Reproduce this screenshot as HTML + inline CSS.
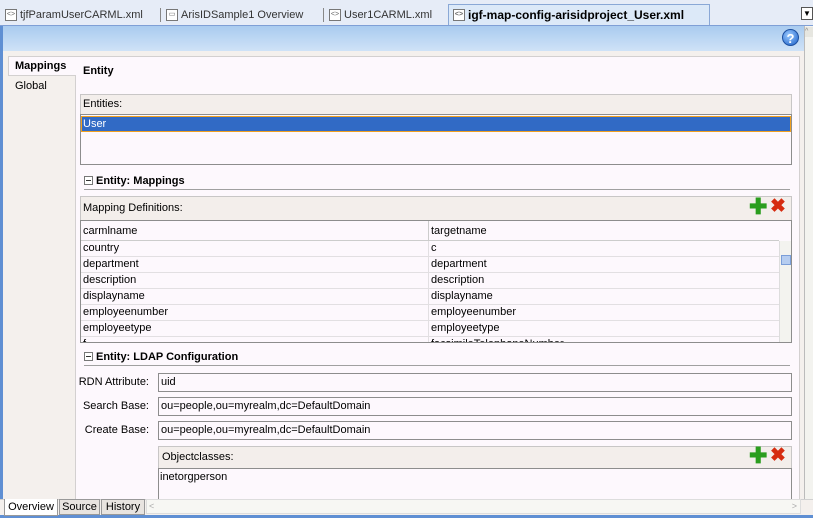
<!DOCTYPE html>
<html><head><style>
*{box-sizing:border-box;margin:0;padding:0}
body{width:813px;height:518px;overflow:hidden;font-family:"Liberation Sans",sans-serif;font-size:11px;color:#000;background:#f4f0ed;position:relative}
.a{position:absolute}
.tab{position:absolute;top:5px;height:20px;line-height:20px;font-size:11px;color:#333;padding-left:18px;white-space:nowrap}
.ic{position:absolute;left:3px;top:4px;width:12px;height:12px;border:1px solid #777;background:#fff;font-size:7px;line-height:10px;text-align:center;color:#666}
.inp{position:absolute;left:158px;width:634px;height:19px;border:1px solid #8d8d8d;background:#fdf8fd;padding-left:2px;line-height:17px}
.lbl{position:absolute;width:72px;text-align:right;left:77px}
.row{position:absolute;left:0;width:698px;height:16px;border-bottom:1px solid #e2dfe2;line-height:15px;padding-left:2px}
.row span{position:absolute;left:347px;top:0;border-left:1px solid #e2dfe2;padding-left:2px;height:16px}
.hd{position:absolute;font-weight:bold;font-size:11px}
.mb{display:inline-block;width:9px;height:9px;border:1px solid #777;vertical-align:-1px;margin-right:3px;position:relative;background:#fff}
.mb:after{content:"";position:absolute;left:1px;top:3px;width:5px;height:1px;background:#333}
.plus{position:absolute;color:#2a9d1e;font-weight:bold;font-size:22px;line-height:16px}
.x{position:absolute;color:#d62b10;font-weight:bold;font-size:19px;line-height:16px}
</style></head><body>
<div class="a" style="left:0;top:0;width:813px;height:26px;background:#e6ecf7"></div>
<div class="tab" style="left:2px">tjfParamUserCARML.xml<div class="ic">&lt;&gt;</div></div>
<div class="a" style="left:160px;top:8px;width:1px;height:14px;background:#888"></div>
<div class="tab" style="left:163px">ArisIDSample1 Overview<div class="ic">▭</div></div>
<div class="a" style="left:323px;top:8px;width:1px;height:14px;background:#888"></div>
<div class="tab" style="left:326px">User1CARML.xml<div class="ic">&lt;&gt;</div></div>
<div class="a" style="left:448px;top:4px;width:262px;height:22px;background:#dce9f8;border:1px solid #8aa8d6;border-bottom:none"></div>
<div class="tab" style="left:450px;font-weight:bold;color:#000;font-size:12px">igf-map-config-arisidproject_User.xml<div class="ic">&lt;&gt;</div></div>
<div class="a" style="left:801px;top:7px;width:12px;height:13px;border:1px solid #555;background:#fff;font-size:8px;text-align:center;line-height:11px">▼</div>
<div class="a" style="left:0;top:25px;width:813px;height:1px;background:#7f9fd6"></div>
<div class="a" style="left:0;top:26px;width:804px;height:25px;background:linear-gradient(#a9cbef,#cfe2f7)"></div>
<div class="a" style="left:0;top:26px;width:3px;height:492px;background:#5f8fd3"></div>
<div class="a" style="left:782px;top:29px;width:17px;height:17px;border-radius:50%;background:radial-gradient(circle at 40% 35%,#9ccbff,#1a5fc8);color:#fff;font-weight:bold;font-size:13px;text-align:center;line-height:17px;border:1px solid #1c4fa0">?</div>
<div class="a" style="left:804px;top:26px;width:9px;height:473px;background:#f3f3ef;border-left:1px solid #bbb"></div>
<div class="a" style="left:805px;top:27px;width:8px;height:10px;background:#e6e6e0;font-size:7px;color:#888;line-height:10px">^</div>
<div class="a" style="left:75px;top:56px;width:725px;height:450px;background:#fdf8fd;border:1px solid #d3d0d0"></div>
<div class="a" style="left:8px;top:56px;width:68px;height:20px;background:#fdf8fd;border:1px solid #d3d0d0;border-right:none"></div>
<div class="a" style="left:15px;top:60px;font-weight:bold">Mappings</div>
<div class="a" style="left:15px;top:80px">Global</div>
<div class="a" style="left:83px;top:65px;font-weight:bold">Entity</div>
<div class="a" style="left:80px;top:94px;width:712px;height:71px;border:1px solid #c8c6c6;background:#f3eeeb"></div>
<div class="a" style="left:83px;top:98px">Entities:</div>
<div class="a" style="left:80px;top:114px;width:712px;height:51px;border:1px solid #8d8d8d;background:#fdf8fd"></div>
<div class="a" style="left:81px;top:116px;width:710px;height:16px;background:#316ac5;border:1px solid #f0a020;color:#fff;line-height:14px;padding-left:1px">User</div>
<div class="hd" style="left:84px;top:175px"><span class="mb"></span>Entity: Mappings</div>
<div class="a" style="left:84px;top:189px;width:706px;height:1px;background:#a0a0a0"></div>
<div class="a" style="left:80px;top:196px;width:712px;height:147px;border:1px solid #c8c6c6;background:#f3eeeb"></div>
<div class="a" style="left:83px;top:202px">Mapping Definitions:</div>
<div class="plus" style="left:749px;top:199px">✚</div>
<div class="x" style="left:770px;top:199px">✖</div>
<div class="a" style="left:80px;top:220px;width:712px;height:123px;border:1px solid #8d8d8d;background:#fdf8fd;overflow:hidden">
 <div class="a" style="left:0;top:0;width:698px;height:20px;background:#fdf8fd;border-bottom:1px solid #ccc;line-height:20px;padding-left:2px">carmlname<span style="position:absolute;left:347px;top:0;border-left:1px solid #ccc;padding-left:2px;height:20px">targetname</span></div>
 <div class="row" style="top:20px">country<span>c</span></div>
 <div class="row" style="top:36px">department<span>department</span></div>
 <div class="row" style="top:52px">description<span>description</span></div>
 <div class="row" style="top:68px">displayname<span>displayname</span></div>
 <div class="row" style="top:84px">employeenumber<span>employeenumber</span></div>
 <div class="row" style="top:100px">employeetype<span>employeetype</span></div>
 <div class="row" style="top:116px">f<span>facsimileTelephoneNumber</span></div>
 <div class="a" style="left:698px;top:20px;width:13px;height:102px;background:#f3f3ef;border-left:1px solid #ddd"></div>
 <div class="a" style="left:700px;top:34px;width:10px;height:10px;background:#b6cdf0;border:1px solid #7b9ed8"></div>
</div>
<div class="hd" style="left:84px;top:351px"><span class="mb"></span>Entity: LDAP Configuration</div>
<div class="a" style="left:84px;top:365px;width:706px;height:1px;background:#a0a0a0"></div>
<div class="lbl" style="top:376px">RDN Attribute:</div>
<div class="inp" style="top:373px">uid</div>
<div class="lbl" style="top:400px">Search Base:</div>
<div class="inp" style="top:397px">ou=people,ou=myrealm,dc=DefaultDomain</div>
<div class="lbl" style="top:424px">Create Base:</div>
<div class="inp" style="top:421px">ou=people,ou=myrealm,dc=DefaultDomain</div>
<div class="a" style="left:158px;top:446px;width:634px;height:60px;border:1px solid #c8c6c6;background:#f3eeeb"></div>
<div class="a" style="left:162px;top:451px">Objectclasses:</div>
<div class="plus" style="left:749px;top:448px">✚</div>
<div class="x" style="left:770px;top:448px">✖</div>
<div class="a" style="left:158px;top:468px;width:634px;height:40px;border:1px solid #8d8d8d;background:#fdf8fd;padding:2px 1px">inetorgperson</div>
<div class="a" style="left:0;top:499px;width:813px;height:19px;background:#f4f0ed;border-top:1px solid #d0d0d0"></div>
<div class="a" style="left:0;top:515px;width:813px;height:3px;background:#5f8fd3"></div>
<div class="a" style="left:4px;top:499px;width:54px;height:17px;background:#fff;border:1px solid #999;border-top:none;text-align:center;line-height:16px">Overview</div>
<div class="a" style="left:59px;top:499px;width:41px;height:16px;background:#e8e4e0;border:1px solid #999;text-align:center;line-height:15px">Source</div>
<div class="a" style="left:101px;top:499px;width:44px;height:16px;background:#e8e4e0;border:1px solid #999;text-align:center;line-height:15px">History</div>
<div class="a" style="left:146px;top:499px;width:655px;height:15px;background:#f7f7f3;border:1px solid #ddd;color:#aaa;font-size:9px;line-height:13px;padding-left:2px">&lt;<span style="position:absolute;right:3px">&gt;</span></div>
</body></html>
